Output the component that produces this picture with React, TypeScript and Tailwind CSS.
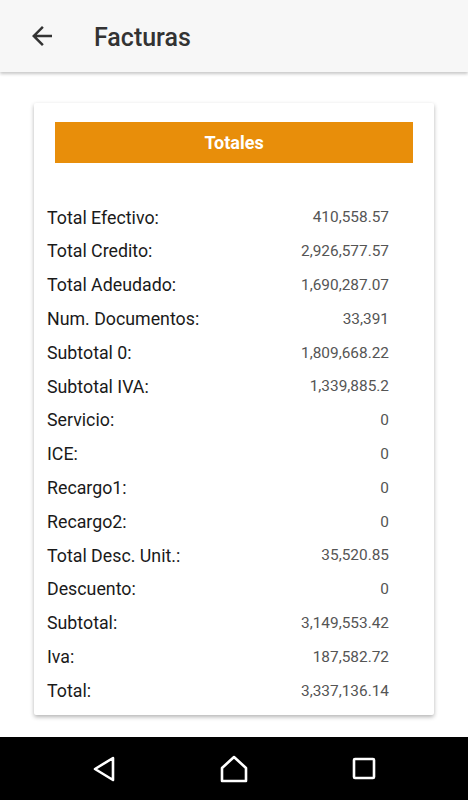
const rows: [string, string][] = [
  ["Total Efectivo:", "410,558.57"],
  ["Total Credito:", "2,926,577.57"],
  ["Total Adeudado:", "1,690,287.07"],
  ["Num. Documentos:", "33,391"],
  ["Subtotal 0:", "1,809,668.22"],
  ["Subtotal IVA:", "1,339,885.2"],
  ["Servicio:", "0"],
  ["ICE:", "0"],
  ["Recargo1:", "0"],
  ["Recargo2:", "0"],
  ["Total Desc. Unit.:", "35,520.85"],
  ["Descuento:", "0"],
  ["Subtotal:", "3,149,553.42"],
  ["Iva:", "187,582.72"],
  ["Total:", "3,337,136.14"],
];

export default function App() {
  return (
    <div className="flex h-[800px] w-[468px] flex-col bg-white font-['Roboto',sans-serif]">
      {/* app bar */}
      <header className="relative z-10 flex h-[72px] shrink-0 items-center bg-[#f7f7f7] shadow-[0_2px_3px_rgba(0,0,0,0.22)]">
        <button className="ml-[27px] flex h-[30px] w-[30px] items-center justify-center text-[#333]">
          <svg width="30" height="30" viewBox="0 0 24 24" fill="currentColor">
            <path d="M20 11H7.83l5.59-5.59L12 4l-8 8 8 8 1.41-1.41L7.83 13H20v-2z" />
          </svg>
        </button>
        <h1 className="ml-[37px] mt-[2px] text-[25px] font-medium leading-none text-[#333]">Facturas</h1>
      </header>

      {/* content */}
      <main className="flex-1 px-[34px] pt-[31px]">
        <div className="rounded-[2px] bg-white px-[21px] pb-[8px] pt-[19px] shadow-[0_2px_4px_rgba(0,0,0,0.3)]">
          <div className="flex h-[41px] items-center justify-center bg-[#e88e0a] text-[18px] font-bold text-white">
            Totales
          </div>
          <div className="mt-[37px] pr-[24px]">
            {rows.map(([label, value]) => (
              <div key={label} className="-ml-[8px] flex h-[33.8px] items-center justify-between pt-[2px]">
                <span className="text-[17.8px] text-[#1a1a1a]">{label}</span>
                <span className="text-[15.4px] text-[#555]">{value}</span>
              </div>
            ))}
          </div>
        </div>
      </main>

      {/* nav bar */}
      <nav className="flex h-[63px] shrink-0 items-center gap-[70px] bg-black pl-[74px]">
        <div className="flex w-[60px] justify-center">
          <svg width="24" height="28" viewBox="0 0 24 28" fill="none" stroke="white" strokeWidth="2.6" strokeLinejoin="round">
            <path d="M21 3 L3 14 L21 25 Z" />
          </svg>
        </div>
        <div className="flex w-[60px] justify-center">
          <svg width="28" height="28" viewBox="0 0 28 28" fill="none" stroke="white" strokeWidth="2.6" strokeLinejoin="round">
            <path d="M14 2 L26 13 V26 H2 V13 Z" />
          </svg>
        </div>
        <div className="flex w-[60px] justify-center">
          <svg width="24" height="24" viewBox="0 0 24 24" fill="none" stroke="white" strokeWidth="2.6">
            <rect x="2" y="2" width="20" height="19" rx="1" />
          </svg>
        </div>
      </nav>
    </div>
  );
}
